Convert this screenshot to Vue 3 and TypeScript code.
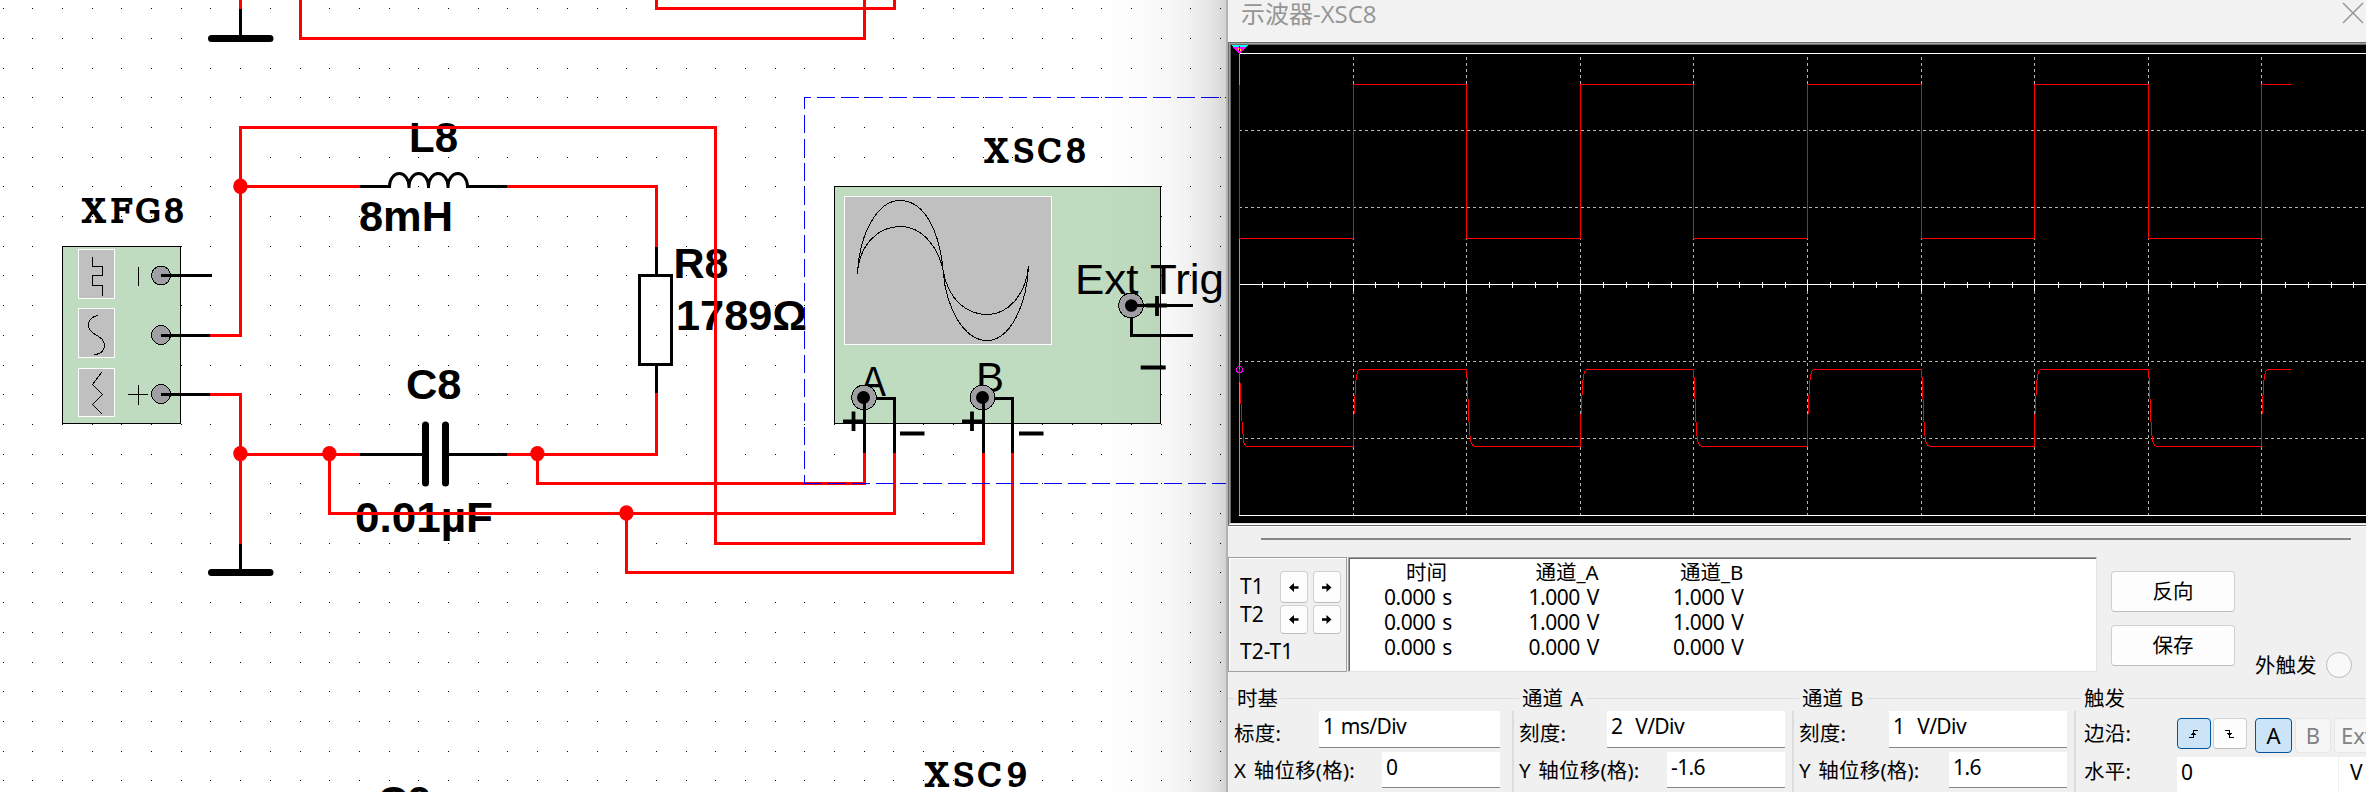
<script setup lang="ts">
interface Label { text: string; x: number; y: number; w: number }
interface Channel { title: string; scaleLabel: string; scale: string; offsetLabel: string; offset: string; cls: string }

const dots: { x: number; y: number }[] = []
for (let j = 0; j < 27; j++) {
  for (let i = 0; i < 42; i++) {
    dots.push({ x: Math.floor(3.1 + 29.695 * i), y: Math.floor(8.6 + 29.7 * j) })
  }
}

const wires: string[] = [
  'M240.5 0V9',
  'M300.5 0V38.5H864.5V0',
  'M656.5 0V8.5H894.5V0',
  'M210 335.5H240.5V127.5H715.5V543.5H983.5V453',
  'M240.5 186.5H360',
  'M507 186.5H656.5V247',
  'M656.5 393V454.5H507',
  'M210 394.5H240.5V544',
  'M240.5 454.5H360',
  'M329.5 454V513.5H894.5V453',
  'M537.5 454V483.5H864.5V453',
  'M626.5 513V572.5H1012.5V453',
]
const leads: string[] = [
  'M240.5 9V36',
  'M240.5 544V570',
  'M161 275.5H211.5',
  'M161 335.5H210',
  'M161 394.5H210',
  'M360 186.5H389.5',
  'M467.5 186.5H507',
  'M360 454.5H424',
  'M447 454.5H507',
  'M656.5 247V275',
  'M656.5 365V393',
]
const nodes = [[240, 186.3], [240, 453.6], [329, 453.6], [537, 453.6], [626, 513]]

const boldLabels: Label[] = [
  { text: 'L8', x: 409, y: 152, w: 49 },
  { text: '8mH', x: 359, y: 231, w: 94 },
  { text: 'R8', x: 673.5, y: 277.5, w: 55 },
  { text: '1789Ω', x: 676, y: 330, w: 131 },
  { text: 'C8', x: 406, y: 399, w: 55.5 },
  { text: '0.01µF', x: 355, y: 531.5, w: 138 },
  { text: 'C9', x: 377.5, y: 815.5, w: 54 },
]
const monoLabels = [
  { text: 'XFG8', x: '94 121.5 148 174', y: 221.5 },
  { text: 'XSC8', x: '996.5 1023.7 1049.5 1076', y: 162 },
  { text: 'XSC9', x: '937 963.7 989.5 1017', y: 786 },
]

const columns = [1353, 1466, 1580, 1693, 1807, 1921, 2034, 2148, 2261]
const rows = [130, 207, 361, 438]
const minorTicks: number[] = []
for (let i = 1; i < 50; i++) {
  if (i % 5 !== 0) minorTicks.push(Math.floor(1239.5 + 22.74 * i))
}

let traceA = 'M1239.5 84.5V238.5'
let traceB = 'M1239.5 369.5L1240.5 395L1241.5 412L1242.5 430L1244 443L1246 446L1248 446.5'
columns.forEach((c, i) => {
  const rising = i % 2 === 0
  traceA += `H${c + 0.5}V${rising ? 84.5 : 238.5}`
  traceB += rising
    ? `H${c + 0.5}V421L${c + 1.5} 407L${c + 2.5} 384L${c + 3.5} 376L${c + 5} 371L${c + 7} 369.5`
    : `H${c + 0.5}L${c + 1.5} 385L${c + 2.5} 412L${c + 3.5} 431L${c + 4.5} 441L${c + 7} 445.5L${c + 9} 446.5`
})
traceA += 'H2291'
traceB += 'H2291'

const readings = [
  { head: '时间', values: ['0.000 s', '0.000 s', '0.000 s'] },
  { head: '通道_A', values: ['1.000 V', '1.000 V', '0.000 V'] },
  { head: '通道_B', values: ['1.000 V', '1.000 V', '0.000 V'] },
]
const channels: Channel[] = [
  { title: '时基', scaleLabel: '标度:', scale: '1 ms/Div', offsetLabel: 'X 轴位移(格):', offset: '0', cls: 'timebase' },
  { title: '通道 A', scaleLabel: '刻度:', scale: '2  V/Div', offsetLabel: 'Y 轴位移(格):', offset: '-1.6', cls: 'chan-a' },
  { title: '通道 B', scaleLabel: '刻度:', scale: '1  V/Div', offsetLabel: 'Y 轴位移(格):', offset: '1.6', cls: 'chan-b' },
]
</script>

<template>
  <div class="screen">
    <svg class="schematic" width="1226" height="792" viewBox="0 0 1226 792">
      <defs>
        <linearGradient id="shade" x1="0" x2="1" y1="0" y2="0">
          <stop offset="0" stop-color="#000" stop-opacity="0" />
          <stop offset="0.4" stop-color="#000" stop-opacity="0.015" />
          <stop offset="0.7" stop-color="#000" stop-opacity="0.05" />
          <stop offset="0.9" stop-color="#000" stop-opacity="0.11" />
          <stop offset="1" stop-color="#000" stop-opacity="0.17" />
        </linearGradient>
      </defs>
      <g shape-rendering="crispEdges">
        <rect v-for="(d, k) in dots" :key="k" :x="d.x" :y="d.y" width="1" height="1" />
      </g>

      <!-- function generator -->
      <g class="thin" shape-rendering="crispEdges">
        <rect class="body" x="62.5" y="246.5" width="118" height="177" />
        <rect class="pane" x="78.5" y="249.5" width="36" height="49" />
        <rect class="pane" x="78.5" y="308.5" width="36" height="49" />
        <rect class="pane" x="78.5" y="368.5" width="36" height="48" />
        <path d="M92.5 257V266.5H102.5V275.5H92.5V285.5H102.5V296" />
        <path d="M98 315.5C91 317 88.5 320 88.5 325C88.5 331 93 333 97 335.5C101 338 104.5 340 104.5 346C104.5 350 101 354.5 94 354.5" />
        <path d="M102 372L92.5 384.5L102.5 394.5L92.5 404.5L102.5 414.5" />
        <path d="M138.5 267V286M138.5 385V405M128 394.5H148" />
        <circle class="port" cx="161" cy="275.5" r="9.5" />
        <circle class="port" cx="161" cy="335" r="9.5" />
        <circle class="port" cx="161" cy="394" r="9.5" />
      </g>

      <!-- oscilloscope symbol -->
      <g class="thin" shape-rendering="crispEdges">
        <rect class="body" x="834.5" y="186.5" width="326" height="237" />
        <rect class="pane" x="844.5" y="196.5" width="207" height="148" />
        <path d="M857.5 274C859 235 877 200.5 900 200.5C926 200.5 940 235 943 270C946 310 965 340.5 987 340.5C1010 340.5 1027 305 1028.5 266" />
        <path d="M857.5 274C859 245 878 226.5 900 226.5C924 226.5 939 250 943 270C948 300 967 314.5 987 314.5C1008 314.5 1026 295 1028.5 266" />
      </g>
      <g class="plain">
        <text x="1075" y="294" textLength="149" lengthAdjust="spacingAndGlyphs">Ext Trig</text>
        <text x="860.5" y="395.5" textLength="25.5" lengthAdjust="spacingAndGlyphs">A</text>
        <text x="976" y="392" textLength="28" lengthAdjust="spacingAndGlyphs">B</text>
      </g>
      <g class="thin" shape-rendering="crispEdges">
        <circle class="port" cx="864" cy="397.5" r="12.3" />
        <circle class="port" cx="982.5" cy="397.5" r="12.3" />
        <circle class="port" cx="1131" cy="305.5" r="12.3" />
      </g>
      <g>
        <circle cx="863.5" cy="397.5" r="6.5" />
        <circle cx="982.5" cy="397.5" r="6.5" />
        <circle cx="1131.3" cy="305.5" r="6.3" />
      </g>
      <g class="lead" shape-rendering="crispEdges">
        <path d="M864.5 397V454M876 398.5H894.5V454M983.5 397V454M995 398.5H1012.5V454" />
        <path d="M1131 305.5H1193M1131.5 318V335.5H1193" />
      </g>
      <path class="sign" d="M843 421.5H864M853.5 411.5V431M962 421.5H983M972 411.5V431M900 433.5H924.5M1019 433.5H1043.5M1146 305.5H1167M1157 296V316M1140.7 367.5H1165.7" />

      <g class="bold">
        <text v-for="l in boldLabels" :key="l.text" :x="l.x" :y="l.y" :textLength="l.w" lengthAdjust="spacingAndGlyphs">{{ l.text }}</text>
      </g>
      <g class="slab">
        <text v-for="l in monoLabels" :key="l.text" :x="l.x" :y="l.y">{{ l.text }}</text>
      </g>

      <g class="lead" shape-rendering="crispEdges">
        <path v-for="p in leads" :key="p" :d="p" />
        <rect x="639.5" y="275.5" width="32" height="89" />
      </g>
      <path class="lead" d="M389.5 188V186.5A9.75 13 0 0 1 409 186.5V188V186.5A9.75 13 0 0 1 428.5 186.5V188V186.5A9.75 13 0 0 1 448 186.5V188V186.5A9.75 13 0 0 1 467.5 186.5V188" />
      <path class="plate" d="M211.5 38.5H270M211.5 572.5H270M425.5 425V483M445.5 425V483" />
      <g class="wire" shape-rendering="crispEdges">
        <path v-for="p in wires" :key="p" :d="p" />
      </g>
      <ellipse v-for="(n, k) in nodes" :key="k" class="node" :cx="n[0] + 0.4" :cy="n[1]" rx="7.2" ry="7.7" />
      <g class="selection" shape-rendering="crispEdges">
        <path d="M804 97.5H1226" stroke-dashoffset="11" />
        <path d="M804.5 97V484" stroke-dashoffset="6" />
        <path d="M804 483.5H1226" />
      </g>
      <rect x="1096" y="0" width="130" height="792" fill="url(#shade)" />
    </svg>

    <section class="window">
      <header class="titlebar">
        <span class="caption">示波器-XSC8</span>
        <svg class="close" width="22" height="22" viewBox="0 0 22 22"><path d="M1 1L21 21M21 1L1 21" /></svg>
      </header>

      <svg class="scope" width="1138" height="485" viewBox="1228 42 1138 485" shape-rendering="crispEdges">
        <rect x="1228" y="42" width="1138" height="485" fill="#696969" />
        <rect x="1229" y="43" width="1137" height="483" fill="#a0a0a0" />
        <rect x="1230" y="44" width="1136" height="480" fill="#696969" />
        <rect x="1231" y="45" width="1135" height="478" fill="#000" />
        <path d="M1230 523.5H2366" stroke="#e8dfe6" />
        <path d="M1229 524.5H2366M1228 526.5H2366" stroke="#fff" />
        <path d="M1228 525.5H2366" stroke="#696969" />
        <g class="grid">
          <path v-for="c in columns" :key="c" :d="`M${c + 0.5} 57V515`" />
          <path v-for="r in rows" :key="r" :d="`M1239 ${r + 0.5}H2364`" />
        </g>
        <path class="axis" d="M1239 53.5H2366M1239 284.5H2366M1239 515.5H2366" />
        <path v-for="c in columns" :key="c" class="axis" :d="`M${c + 0.5} 280V291`" />
        <path v-for="t in minorTicks" :key="t" class="axis" :d="`M${t + 0.5} 282V288`" />
        <path d="M1239.5 53V515" stroke="#00ff00" />
        <path class="trace" :d="traceA" />
        <path class="trace" :d="traceB" />
        <path d="M1231 45H1248L1246 47H1233Z" fill="#00ffff" />
        <path d="M1233 47H1246L1240 53.5H1239Z" fill="#ff00ff" />
        <path d="M1239.5 46V52" stroke="#000" stroke-dasharray="2 1" />
        <path d="M1238.5 48V50M1240.5 49V51" stroke="#ffff00" />
        <circle cx="1239.5" cy="369.5" r="3" fill="none" stroke="#ff00ff" />
      </svg>

      <div class="slider"></div>

      <div class="readout">
        <div class="cursors">
          <span class="name">T1</span>
          <button class="step"><svg width="10" height="9" viewBox="0 0 10 9"><path d="M0 4.5L5 0V3.3H9.5V5.7H5V9Z" /></svg></button>
          <button class="step"><svg width="10" height="9" viewBox="0 0 10 9"><path d="M9.5 4.5L4.5 0V3.3H0V5.7H4.5V9Z" /></svg></button>
          <span class="name second">T2</span>
          <button class="step"><svg width="10" height="9" viewBox="0 0 10 9"><path d="M0 4.5L5 0V3.3H9.5V5.7H5V9Z" /></svg></button>
          <button class="step"><svg width="10" height="9" viewBox="0 0 10 9"><path d="M9.5 4.5L4.5 0V3.3H0V5.7H4.5V9Z" /></svg></button>
          <span class="name delta">T2-T1</span>
        </div>
        <div class="table">
          <div v-for="r in readings" :key="r.head" class="reading">
            <span class="head">{{ r.head }}</span>
            <span v-for="(v, k) in r.values" :key="k">{{ v }}</span>
          </div>
        </div>
        <div class="actions">
          <button>反向</button>
          <button>保存</button>
        </div>
        <div class="external">
          <span>外触发</span>
          <i class="radio"></i>
        </div>
      </div>

      <div class="groups">
        <div v-for="c in channels" :key="c.title" class="group" :class="c.cls">
          <div class="legend"><span>{{ c.title }}</span></div>
          <div class="row"><label>{{ c.scaleLabel }}</label><div class="field scale">{{ c.scale }}</div></div>
          <div class="row low"><label>{{ c.offsetLabel }}</label><div class="field offset">{{ c.offset }}</div></div>
        </div>
        <div class="group trigger">
          <div class="legend"><span>触发</span></div>
          <div class="row edge">
            <label>边沿:</label>
            <button class="slope on"><svg width="10" height="10" viewBox="0 0 10 10"><path d="M0 8.5H4.5V1.5H9M2 5.5H7M3 4.5H6" /></svg></button>
            <button class="slope"><svg width="10" height="10" viewBox="0 0 10 10"><path d="M0 1.5H4.5V8.5H9M2 4.5H7M3 5.5H6" /></svg></button>
            <button class="source on first">A</button>
            <button class="source off">B</button>
            <button class="source off ext">Ext</button>
          </div>
          <div class="row level">
            <label>水平:</label>
            <div class="field value">0</div>
            <div class="field unit">V</div>
          </div>
        </div>
      </div>
    </section>
  </div>
</template>

<style>
body { margin: 0; overflow: hidden; }
</style>

<style scoped>
.screen { display: flex; width: 2366px; height: 792px; overflow: hidden; background: #fff; }
.schematic { display: block; flex: none; }
.thin { fill: none; stroke: #000; stroke-width: 1; }
.body { fill: #c0dcc0; }
.pane { fill: #c0c0c0; stroke: #fff; }
.port { fill: #a0a0a4; }
.lead { fill: none; stroke: #000; stroke-width: 3; }
.wire { fill: none; stroke: #f00; stroke-width: 3; }
.node { fill: #f00; }
.plate { fill: none; stroke: #000; stroke-width: 7; stroke-linecap: round; }
.sign { fill: none; stroke: #000; stroke-width: 3.8; }
.selection path { fill: none; stroke: #00f; stroke-width: 1; stroke-dasharray: 18 6; }
.plain { font: 42px "Liberation Sans", Arial, sans-serif; }
.bold { font: bold 43px "Liberation Sans", Arial, sans-serif; }
.slab text { font: 32px "DejaVu Serif", serif; text-anchor: middle; stroke: #000; stroke-width: 1.8px; }

.window {
  flex: none; box-sizing: border-box; width: 1140px; height: 792px; overflow: hidden;
  border-left: 2px solid #b2b2b2; background: #f0f0f0;
  display: flex; flex-direction: column;
  font: 21px/25px "Noto Sans", "Noto Sans CJK SC", sans-serif; color: #000;
}
.titlebar { flex: none; height: 42px; background: #f2f2f2; display: flex; justify-content: space-between; color: #959595; }
.caption { margin: 0 0 0 13px; font: 24px/27px "Open Sans", "Noto Sans CJK SC", sans-serif; white-space: nowrap; }
.close { margin: 2px 2px 0 0; fill: none; stroke: #999; stroke-width: 1.6; }
.scope { display: block; flex: none; }
.grid path { fill: none; stroke: #b4b4b4; stroke-dasharray: 3 3; }
.axis { fill: none; stroke: #fff; }
.trace { fill: none; stroke: #f00; }
.slider { flex: none; height: 2px; margin: 11px 15px 17px 33px; background: #868686; }

.readout { flex: none; display: flex; height: 115px; }
button { box-sizing: border-box; flex: none; padding: 0; border: 1px solid #d0d0d0; border-bottom-color: #bcbcbc; border-radius: 4px; background: #fdfdfd; font: inherit; color: #000; display: flex; align-items: center; justify-content: center; }
.cursors {
  box-sizing: border-box; width: 119px; height: 115px; padding: 13px 4px 0 11px;
  border: 1px solid #a0a0a0; box-shadow: inset 1px 1px #fff;
  display: grid; grid-template-columns: 35px 28px 28px; grid-template-rows: 32px 29px 1fr; column-gap: 5px; row-gap: 2px;
}
.cursors .name { line-height: 30px; white-space: nowrap; }
.cursors .second { margin-top: -6px; }
.cursors .delta { grid-column: 1 / 4; }
.step { width: 28px; }
.table {
  box-sizing: border-box; width: 749px; height: 115px; margin-left: 1px; padding: 1px 0 0 35px;
  border: 1px solid #a0a0a0; border-right-color: #e3e3e3; border-bottom-color: #e3e3e3;
  box-shadow: inset 1px 1px #696969; background: #fff; display: flex; align-items: flex-start;
}
.reading { width: 144.5px; display: flex; flex-direction: column; line-height: 25px; white-space: pre; letter-spacing: -0.5px; word-spacing: 2px; }
.reading .head { padding-left: 22px; height: 26px; line-height: 27px; font-size: 20.5px; letter-spacing: 0; }
.reading + .reading .head { padding-left: 7px; }
.actions { margin: 14px 0 0 14px; display: flex; flex-direction: column; gap: 13px; }
.actions button { width: 124px; height: 41px; font-size: 20.5px; }
.external { margin: 95px 0 0 20px; display: flex; align-items: center; height: 26px; font-size: 20.5px; gap: 9px; white-space: nowrap; }
.radio { box-sizing: border-box; width: 26px; height: 26px; border: 1.5px solid #bdbdbd; border-radius: 50%; background: #f9f9f9; }

.groups { flex: none; display: flex; height: 130px; padding-top: 13px; }
.group { flex: none; }
.timebase { width: 284px; }
.chan-a { width: 280px; }
.chan-b { width: 282px; }
.trigger { width: 300px; }
.legend { height: 26px; display: flex; align-items: center; white-space: pre; }
.legend::before, .legend::after { content: ""; height: 1px; background: #dcdcdc; }
.legend::before { width: 6px; }
.legend::after { flex: 1; }
.legend span { padding: 1px 3px 0 3px; font-size: 20.5px; word-spacing: 2px; }
.group + .group .legend::before { width: 7px; }
.group .row { border-left: 2px solid #dcdcdc; }
.timebase .row { border-left-color: transparent; }
.row { box-sizing: border-box; display: flex; justify-content: space-between; height: 41px; padding: 0 12px 0 4px; white-space: pre; }
.chan-a .row, .chan-b .row { padding-right: 7px; padding-left: 5px; }
.row label { line-height: 45px; font-size: 20.5px; letter-spacing: 0.2px; word-spacing: 2px; }
.row.low { height: 50px; }
.row.low label { line-height: 37px; }
.field { box-sizing: border-box; flex: none; height: 37px; padding-left: 4px; line-height: 31px; background: #fff; border-bottom: 1px solid #868686; letter-spacing: -0.6px; word-spacing: 1.5px; }
.low .field { height: 36px; line-height: 30px; }
.scale { width: 181px; }
.offset { width: 118px; }
.chan-a .scale, .chan-b .scale { width: 178px; }
.trigger .row { justify-content: flex-start; padding: 7px 0 0 8px; }
.trigger label { width: 93px; flex: none; line-height: 30px; }
.trigger .edge { height: 46px; }
.slope { width: 34px; height: 31px; margin-right: 2px; }
.slope svg { fill: none; stroke: #000; shape-rendering: crispEdges; }
.source { width: 36px; height: 35px; margin-right: 3px; font-size: 22px; }
.source.first { margin-left: 6px; width: 37px; }
.source.ext { width: 60px; justify-content: flex-start; padding-left: 6px; }
.on { background: #cce4f7; border: 1px solid #005499; }
.off { color: #838383; border-color: #e6e6e6; background: #f6f6f6; }
.trigger .level { height: 45px; padding-top: 0; }
.trigger .level label { line-height: 29px; }
.value { width: 161px; height: 45px; margin-right: 1px; line-height: 31px; }
.unit { width: 60px; height: 45px; padding-left: 11px; line-height: 31px; }
</style>
